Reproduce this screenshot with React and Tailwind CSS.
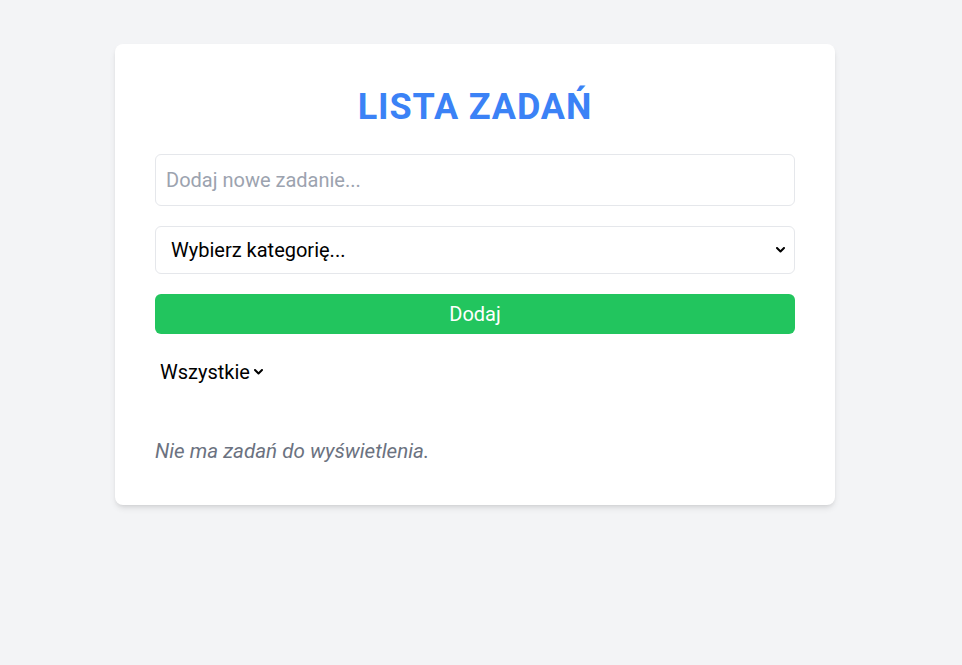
import { useState } from "react";

function Chevron({ className }) {
    return (
        <svg className={className} width="9" height="6" viewBox="0 0 9 6" fill="none">
            <polyline points="1,1 4.5,4.5 8,1" stroke="#000" strokeWidth="2" strokeLinecap="round" strokeLinejoin="round" />
        </svg>
    );
}

export default function App() {
    const [task, setTask] = useState("");
    const [category, setCategory] = useState("");
    const [filter, setFilter] = useState("all");
    const [tasks, setTasks] = useState([]);

    const addTask = () => {
        if (!task.trim()) return;
        setTasks([...tasks, { text: task, category }]);
        setTask("");
    };

    const visible = tasks.filter((t) => filter === "all" || t.category === filter);

    return (
        <div className="min-h-screen bg-[#f3f4f6] pt-[44px] font-['Roboto',sans-serif]">
            <div className="ml-[115px] w-[720px] bg-white rounded-lg shadow-md px-10 pt-[43px] pb-10">
                <h1 className="text-4xl font-bold tracking-wide text-center text-[#3b82f6] mb-[27px]">LISTA ZADAŃ</h1>

                <input
                    value={task}
                    onChange={(e) => setTask(e.target.value)}
                    placeholder="Dodaj nowe zadanie..."
                    className="block w-full h-[52px] px-[10px] text-xl border border-[#e5e7eb] rounded-md placeholder:text-[#9ca3af] outline-none"
                />

                <div className="relative mt-5">
                    <select
                        value={category}
                        onChange={(e) => setCategory(e.target.value)}
                        className="block w-full h-12 appearance-none pl-[15px] pr-8 text-xl text-black border border-[#e5e7eb] rounded-md bg-white"
                    >
                        <option value="">Wybierz kategorię...</option>
                        <option value="praca">Praca</option>
                        <option value="dom">Dom</option>
                    </select>
                    <Chevron className="pointer-events-none absolute right-[10px] top-[21px]" />
                </div>

                <button
                    onClick={addTask}
                    className="block w-full h-10 mt-5 bg-[#22c55e] text-white text-xl rounded-md"
                >
                    Dodaj
                </button>

                <div className="relative w-fit mt-5">
                    <select
                        value={filter}
                        onChange={(e) => setFilter(e.target.value)}
                        className="block h-9 appearance-none pl-[5px] pr-[17px] text-xl text-black bg-white"
                    >
                        <option value="all">Wszystkie</option>
                        <option value="praca">Praca</option>
                        <option value="dom">Dom</option>
                    </select>
                    <Chevron className="pointer-events-none absolute right-[4px] top-[15px]" />
                </div>

                <div className="mt-[47px]">
                    {visible.length === 0 ? (
                        <p className="text-[20.6px] leading-7 italic text-[#6b7280]">Nie ma zadań do wyświetlenia.</p>
                    ) : (
                        visible.map((t, i) => <p key={i} className="text-xl">{t.text}</p>)
                    )}
                </div>
            </div>
        </div>
    );
}
